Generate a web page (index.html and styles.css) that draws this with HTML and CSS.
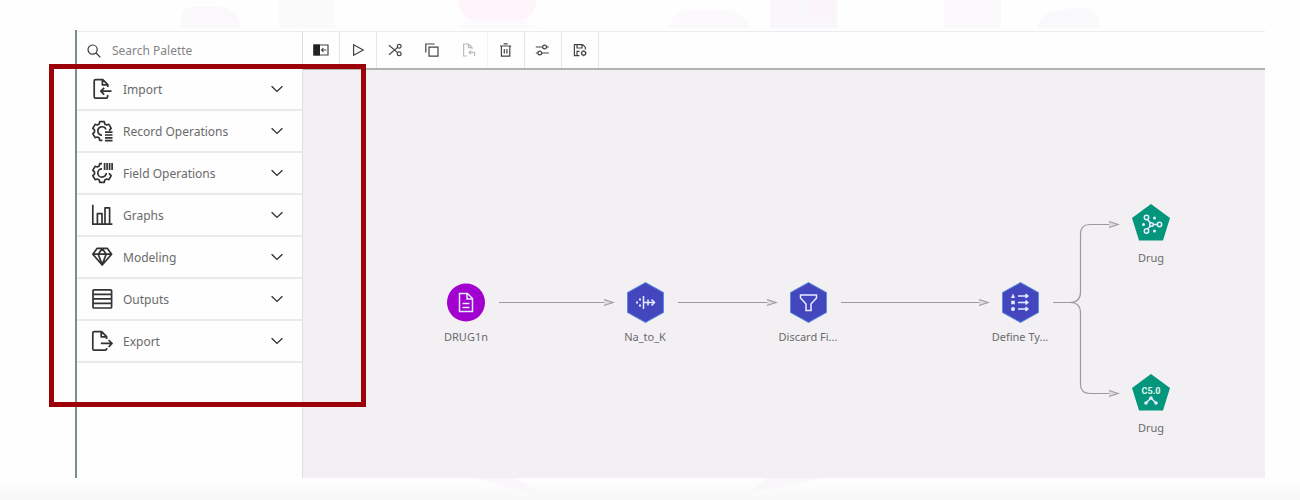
FILE: index.html
```html
<!DOCTYPE html>
<html lang="en">
<head>
<meta charset="utf-8">
<title>Flow editor</title>
<link rel="stylesheet" href="styles.css">
</head>
<body>
<svg class="defs" aria-hidden="true">
  <symbol id="chevron" viewBox="0 0 12 8"><path d="M.6 1.2 6 6.4 11.400 1.2"/></symbol>
  <symbol id="hexagon" viewBox="0 0 40 44"><path class="hex" d="M20.5 2.500 38.500 12.500V32.500L20.500 42.500 2.500 32.500V12.500Z"/></symbol>
  <symbol id="pentagon" viewBox="0 0 40 44"><path class="pent" d="M20 4 39 18 32 40.5H8L1 18Z"/></symbol>
</svg>
<svg class="backdrop backdrop-top" viewBox="0 0 1300 30" aria-hidden="true">
  <path fill="#faf8fb" d="M180 28Q181 7 190 7Q225 4 234 12Q240 17 241 28Z"/>
  <path fill="#fafafa" d="M279 0H335V28H279Z"/>
  <path fill="#fdf5f9" d="M457 0H537Q534 19 520 20Q490 24 470 20Q460 16 457 0Z"/>
  <path fill="#fdfafd" d="M458 28Q459 22 466 20H526L538 28Z"/>
  <path fill="#fbf9fc" d="M667 28Q676 10 690 10H726Q742 12 751 28Z"/>
  <path fill="#f9f7fb" d="M770 0H837V28H770Z"/>
  <path fill="#fbf5f9" d="M807 0H835V18H807Z"/>
  <path fill="#faf8fb" d="M944 0H1001V28H944Z"/>
  <path fill="#f9f8fa" d="M1038 28Q1038 13 1060 11Q1072 6 1089 9Q1099 12 1100 28Z"/>
</svg>
<main class="app">
  <aside class="palette">
    <label class="search">
      <svg width="14" height="14" viewBox="0 0 14 14" aria-hidden="true"><circle cx="5.6" cy="5.6" r="4.6"/><path d="M9 9 13.4 13.4"/></svg>
      <input type="search" placeholder="Search Palette" aria-label="Search Palette">
    </label>
    <nav class="categories">
      <button class="category"><svg class="cat-icon" viewBox="0 0 22 22"><path d="M16.8 9V6.6L11.8 1.6H4.6Q3.2 1.6 3.2 3V18.8Q3.2 20.2 4.6 20.2H15.2Q16.6 20.2 16.6 18.8V17M11.4 1.8V6.8H16.6M20.5 13.2H9.8M13.2 9.8 9.8 13.2 13.2 16.6"/></svg><span>Import</span><svg class="chevron"><use href="#chevron"/></svg></button>
      <button class="category"><svg class="cat-icon" viewBox="0 0 22 22"><path d="M19.4 10.6 18.5 9.9 20.2 8.3 17.9 4.3 15.7 5 13.8 4 13.3 1.7H8.7L8.2 4 6.3 5 4.1 4.3 1.8 8.3 3.5 9.9V12.1L1.8 13.7 4.1 17.7 6.3 17 8.2 18 8.7 20.3H11.4M15 9.5A4.2 4.2 0 1 0 11 15.2"/><path d="M14 12.2H21.5M14 15H21.5M14 17.8H21.5M14 20.6H21.5"/></svg><span>Record Operations</span><svg class="chevron"><use href="#chevron"/></svg></button>
      <button class="category"><svg class="cat-icon" viewBox="0 0 22 22"><path d="M11 1.7H8.7L8.2 4 6.3 5 4.1 4.3 1.8 8.3 3.5 9.9V12.1L1.8 13.7 4.1 17.7 6.3 17 8.2 18 8.7 20.3H13.3L13.8 18 15.7 17 17.9 17.7 20.2 13.7 18.5 12.1V11M11 6.8A4.2 4.2 0 1 0 15.2 11"/><path d="M13.6 1V8M16.1 1V8M18.6 1V8M21.1 1V8"/></svg><span>Field Operations</span><svg class="chevron"><use href="#chevron"/></svg></button>
      <button class="category"><svg class="cat-icon" viewBox="0 0 22 22"><path d="M1.8 .8V20.2H21.4M6.4 20V9.600H11V20M14 20V3.800H18.600V20"/></svg><span>Graphs</span><svg class="chevron"><use href="#chevron"/></svg></button>
      <button class="category"><svg class="cat-icon" viewBox="0 0 22 22"><path d="M6 2.4H16.4L20.6 8.2 11.2 19 1.8 8.2ZM1.8 8.2H20.6M11.2 2.4 7.2 8.2 11.2 18.6 15.2 8.2Z"/></svg><span>Modeling</span><svg class="chevron"><use href="#chevron"/></svg></button>
      <button class="category"><svg class="cat-icon" viewBox="0 0 22 22"><path d="M3 1.8H19.6Q20.6 1.8 20.6 2.8V19Q20.6 20 19.6 20H3Q2 20 2 19V2.8Q2 1.8 3 1.8ZM2 6.4H20.6M2 10.9H20.6M2 15.4H20.6"/></svg><span>Outputs</span><svg class="chevron"><use href="#chevron"/></svg></button>
      <button class="category"><svg class="cat-icon" viewBox="0 0 22 22"><path d="M15.6 9V6.6L10.6 1.6H3.2Q1.8 1.6 1.8 3V18.8Q1.8 20.2 3.2 20.2H14.2Q15.6 20.2 15.6 18.8V18M10.2 1.8V6.8H15.4M9.8 13.4H21M17.6 10 21 13.4 17.6 16.8"/></svg><span>Export</span><svg class="chevron"><use href="#chevron"/></svg></button>
    </nav>
  </aside>
  <section class="workspace">
    <div class="toolbar" role="toolbar" aria-label="Flow actions">
      <button class="tool end" aria-label="Toggle palette"><svg viewBox="0 0 16 16"><path d="M1 3H15V13H1Z"/><path class="solid" d="M1 3H6.4V13H1Z"/><path d="M13.4 8H8.6M10.4 6.2 8.6 8 10.4 9.8"/></svg></button>
      <button class="tool end" aria-label="Run"><svg viewBox="0 0 16 16"><path d="M3.6 2.8 13.2 8 3.6 13.2Z"/></svg></button>
      <button class="tool" aria-label="Cut"><svg viewBox="0 0 16 16"><circle cx="12.2" cy="4.3" r="1.9"/><circle cx="12.2" cy="11.7" r="1.9"/><path d="M2 3.2 10.6 10.6M2 12.8 10.6 5.4"/></svg></button>
      <button class="tool" aria-label="Copy"><svg viewBox="0 0 16 16"><path d="M5 5.2H14V14.2H5ZM1.800 10.6V2H10.600"/></svg></button>
      <button class="tool end" aria-label="Paste" disabled><svg viewBox="0 0 16 16"><path d="M6 14H2.600V2H7.600L11 5.4V7M7.400 2V5.6H10.800M13.600 14V10.4H8M10 8.4 8 10.4 10 12.4"/></svg></button>
      <button class="tool end" aria-label="Delete"><svg viewBox="0 0 16 16"><path d="M2 4H13.200M3.400 4V14.2H11.800V4M5.600 1.8H9.600M6.300 7V11.4M8.900 7V11.4"/></svg></button>
      <button class="tool end" aria-label="Settings"><svg viewBox="0 0 16 16"><path d="M.8 5H7.600M11.600 5H13.800M.8 11H2.800M6.800 11H13.800"/><circle cx="9.600" cy="5" r="1.9"/><circle cx="4.800" cy="11" r="1.9"/></svg></button>
      <button class="tool end" aria-label="Save"><svg viewBox="0 0 16 16"><path d="M7.4 13.6H2.4V2.6H10.6L13.4 5.4V7.4M5 2.6V6H10V2.6M5 13.4V9.4H7.6"/><circle cx="11.6" cy="11.2" r="2"/><path d="M11.6 8.4V9M11.6 13.4V14.2M8.8 11.2H9.4M13.8 11.2H14.6"/></svg></button>
    </div>
    <div class="canvas">
      <svg class="edges" width="962" height="408" viewBox="303 70 962 408" aria-hidden="true">
        <path d="M499 302.5H612M678 302.5H775M841 302.5H987M1053 302.5H1070Q1080.5 302.5 1080.5 292V234Q1080.5 224.5 1090 224.5H1117M1070 302.5Q1080.5 302.5 1080.5 313V384Q1080.5 393.5 1090 393.5H1117"/>
        <path class="head" d="M604 299.5 613 302.5 604 305.5M767 299.5 776 302.5 767 305.5M979 299.5 988 302.5 979 305.5M1109 221.5 1118 224.5 1109 227.5M1109 390.5 1118 393.5 1109 396.5"/>
      </svg>
      <div class="node n-source"><svg viewBox="0 0 40 44"><circle class="disc" cx="20" cy="22.5" r="19"/><path class="bold" d="M13.500 13.5H21.500L26.500 18.5V31.5H13.500ZM21 13.5V19H26.500M16.500 23.5H23.500M16.500 27.5H23.500"/></svg><span>DRUG1n</span></div>
      <div class="node n-derive"><svg viewBox="0 0 40 44"><use href="#hexagon"/><path class="bold" d="M18.5 16V29M18.5 22.5H29.500M26.5 19.500 29.5 22.500 26.5 25.500M23 19.5V25.500"/><path class="dots" d="M14 18.5h2v2h-2zM11 21.500h2v2h-2zM14 24.500h2v2h-2z"/></svg><span>Na_to_K</span></div>
      <div class="node n-filter"><svg viewBox="0 0 40 44"><use href="#hexagon"/><path class="bold" d="M12.5 15H28.500V18L23 24V30.500H18V24L12.5 18Z"/></svg><span>Discard Fi...</span></div>
      <div class="node n-type"><svg viewBox="0 0 40 44"><use href="#hexagon"/><path class="bold" d="M18 16H27.5M18 22.500H27.5M18 29H27.5M25.5 14.2 27.8 16 25.5 17.8M25.5 20.7 27.8 22.5 25.5 24.3M25.5 27.2 27.8 29 25.5 30.8"/><path class="dots" d="M13 13.5 15 18H11ZM11.2 20.700h3.6v3.6h-3.6z"/><circle class="dots" cx="13" cy="29" r="2"/></svg><span>Define Ty...</span></div>
      <div class="node n-net"><svg viewBox="0 0 40 44"><use href="#pentagon"/><g class="bold"><circle cx="15.5" cy="17.5" r="2.2"/><circle cx="15.5" cy="31" r="2.2"/><circle cx="28.5" cy="24.5" r="2.2"/><circle cx="20.5" cy="24.5" r="1.8"/><path d="M16.5 19.5 19.5 23M16.5 29 19.5 26M22.5 24.5H26"/></g><g class="dots"><circle cx="23.5" cy="18" r="1.5"/><circle cx="12.5" cy="24.5" r="1.5"/><circle cx="23.5" cy="31" r="1.5"/></g></svg><span>Drug</span></div>
      <div class="node n-tree"><svg viewBox="0 0 40 44"><use href="#pentagon"/><text x="20" y="24">C5.0</text><path class="bold" d="M15 33 20 28 25 33"/><g class="dots"><circle cx="20" cy="28" r="1.8"/><circle cx="15" cy="33" r="1.8"/><circle cx="25" cy="33" r="1.8"/></g></svg><span>Drug</span></div>
    </div>
  </section>
</main>
<svg class="backdrop backdrop-bottom" viewBox="0 0 1300 22" aria-hidden="true">
  <path fill="#f9f7fa" d="M476 0H516L540 14 534 16 498 7Z"/>
  <path fill="#f9f7fa" d="M767 0H825L770 11 745 16Z"/>
</svg>
<div class="highlight"></div>
</body>
</html>
```

FILE: styles.css
```css
* {
  box-sizing: border-box;
}

body {
  position: relative;
  display: flex;
  flex-direction: column;
  min-height: 100vh;
  margin: 0;
  background: linear-gradient(#fefefe calc(100% - 22px), #f8f8f8);
  font-family: "Noto Sans", "Open Sans", sans-serif;
  color: #6a6a6a;
}

button {
  padding: 0;
  border: 0;
  background: none;
  font: inherit;
  color: inherit;
}

svg {
  display: block;
  flex: none;
  fill: none;
  stroke: #333;
}

.defs {
  position: absolute;
  width: 0;
  height: 0;
}

.backdrop {
  width: 100%;
  stroke: none;
}

.backdrop-top {
  height: 30px;
}

.backdrop-bottom {
  height: 22px;
}

.app {
  display: flex;
  flex: 1;
  margin: 0 35px 0 75px;
  border-left: 2px solid #76918a;
}

.palette {
  display: flex;
  flex-direction: column;
  width: 226px;
  margin-top: 1px;
  border-top: 1px solid #ebebed;
  border-right: 1px solid #dedee0;
  background: #fefefe;
}

.search {
  display: flex;
  align-items: center;
  gap: 11px;
  height: 37px;
  padding-left: 10px;
}

.search svg {
  stroke-width: 1.2;
}

.search input {
  flex: 1;
  min-width: 0;
  padding: 0;
  border: 0;
  outline: 0;
  background: transparent;
  font: inherit;
  font-size: 12px;
}

.search input::placeholder {
  color: #858585;
  opacity: 1;
}

.categories {
  display: flex;
  flex-direction: column;
}

.category {
  display: flex;
  align-items: center;
  gap: 10px;
  height: 42px;
  padding: 0 19px 0 14px;
  border-bottom: 2px solid #e9e9eb;
  font-size: 12px;
  text-align: left;
}

.category span {
  flex: 1;
}

.cat-icon {
  width: 22px;
  height: 22px;
  stroke-width: 1.7;
  stroke-linejoin: round;
}

.chevron {
  width: 12px;
  height: 8px;
  stroke-width: 1.4;
}

.workspace {
  display: flex;
  flex: 1;
  flex-direction: column;
  min-width: 0;
  margin-top: 1px;
  border-top: 1px solid #ebebed;
}

.toolbar {
  display: flex;
  height: 38px;
  border-bottom: 2px solid #b2b2b4;
  background: #fefefe;
}

.tool {
  display: grid;
  place-items: center;
  width: 37px;
  border-right: 1px solid transparent;
}

.tool.end {
  border-right-color: #e6e4e8;
}

.tool svg {
  width: 16px;
  height: 16px;
  stroke: #444;
  stroke-width: 1.2;
}

.tool:disabled {
  opacity: 0.35;
}

.tool .solid {
  fill: #222;
  stroke: #222;
}

.canvas {
  position: relative;
  flex: 1;
  overflow: hidden;
  background: #f3f0f4;
}

.edges {
  position: absolute;
  top: 0;
  left: 0;
  stroke: #9c9a9e;
  stroke-width: 1.2;
}

.head {
  fill: #dddbdf;
}

.node {
  position: absolute;
  display: flex;
  flex-direction: column;
  align-items: center;
  gap: 4px;
  width: 80px;
  font-size: 11px;
  line-height: 18px;
}

.node svg {
  width: 40px;
  height: 44px;
  stroke: #e6ecff;
}

.n-source { left: 123px; top: 210px; }
.n-derive { left: 302px; top: 210px; }
.n-filter { left: 465px; top: 210px; }
.n-type { left: 677px; top: 210px; }
.n-net { left: 808px; top: 130px; }
.n-tree { left: 808px; top: 300px; }

.n-net,
.n-tree {
  gap: 5px;
}

.disc {
  fill: #a100cf;
  stroke: none;
}

.hex {
  fill: #4346bd;
  stroke: #5c8fe0;
  stroke-width: 1;
}

.pent {
  fill: #04967c;
  stroke: none;
}

.bold {
  stroke-width: 1.5;
}

.dots {
  fill: #e6ecff;
  stroke: none;
}

.n-tree text {
  fill: #e4f6f1;
  stroke: none;
  font-family: Roboto, sans-serif;
  font-size: 9px;
  font-weight: 700;
  text-anchor: middle;
}

.highlight {
  position: absolute;
  top: 64px;
  left: 49px;
  width: 317px;
  height: 343px;
  border: 5px solid #9c0008;
  pointer-events: none;
}
```
